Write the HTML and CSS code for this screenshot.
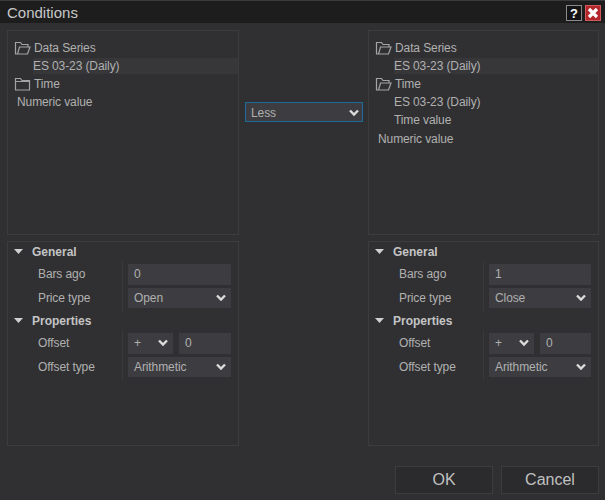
FILE: index.html
```html
<!DOCTYPE html>
<html lang="en">
<head>
<meta charset="utf-8">
<title>Conditions</title>
<link rel="stylesheet" href="styles.css">
</head>
<body>
<svg class="defs" width="0" height="0" aria-hidden="true">
  <symbol id="open" viewBox="0 0 17 14"><path d="M3.5 13H1.5V1.5H6.5L8 3.5H14V6M3.5 13L5.5 6H16L13.5 13H3.5Z" fill="none" stroke="#a3a3a3" stroke-width="1.2"/></symbol>
  <symbol id="closed" viewBox="0 0 17 14"><path d="M1.5 13V1.5H6.5L8 3.5H15.5V13H1.5ZM1.5 4.5H15.5" fill="none" stroke="#a3a3a3" stroke-width="1.2"/></symbol>
  <symbol id="chev" viewBox="0 0 10 8"><path d="M1 1.5L5 5.5L9 1.5" fill="none" stroke="#dcdcdc" stroke-width="2.4"/></symbol>
  <symbol id="tri" viewBox="0 0 9 5"><path d="M0 0H9L4.5 5Z" fill="#d0d0d0"/></symbol>
</svg>
<div class="window">
  <header class="titlebar">
    <h1 class="title">Conditions</h1>
    <div class="winbtns">
      <span class="winbtn help">?</span>
      <span class="winbtn close"><svg width="12" height="12" viewBox="0 0 12 12"><path d="M2 2L10 10M10 2L2 10" stroke="#fff" stroke-width="3.2"/></svg></span>
    </div>
  </header>
  <main class="content">
    <section class="side side-left">
      <div class="panel tree">
        <div class="row"><svg class="folder"><use href="#open"/></svg>Data Series</div>
        <div class="row sel">ES 03-23 (Daily)</div>
        <div class="row"><svg class="folder"><use href="#closed"/></svg>Time</div>
        <div class="row leaf">Numeric value</div>
      </div>
      <div class="panel props">
        <div class="group"><svg class="tri"><use href="#tri"/></svg>General</div>
        <div class="fields">
          <div class="field"><span class="label">Bars ago</span><span class="ctl input">0</span></div>
          <div class="field"><span class="label">Price type</span><span class="ctl select">Open<svg class="chev"><use href="#chev"/></svg></span></div>
        </div>
        <div class="group"><svg class="tri"><use href="#tri"/></svg>Properties</div>
        <div class="fields">
          <div class="field"><span class="label">Offset</span><span class="pair"><span class="ctl select sign">+<svg class="chev"><use href="#chev"/></svg></span><span class="ctl input num">0</span></span></div>
          <div class="field"><span class="label">Offset type</span><span class="ctl select">Arithmetic<svg class="chev"><use href="#chev"/></svg></span></div>
        </div>
      </div>
    </section>
    <div class="middle">
      <div class="ctl select compare">Less<svg class="chev"><use href="#chev"/></svg></div>
    </div>
    <section class="side side-right">
      <div class="panel tree">
        <div class="row"><svg class="folder"><use href="#open"/></svg>Data Series</div>
        <div class="row sel">ES 03-23 (Daily)</div>
        <div class="row"><svg class="folder"><use href="#open"/></svg>Time</div>
        <div class="row child">ES 03-23 (Daily)</div>
        <div class="row child">Time value</div>
        <div class="row leaf">Numeric value</div>
      </div>
      <div class="panel props">
        <div class="group"><svg class="tri"><use href="#tri"/></svg>General</div>
        <div class="fields">
          <div class="field"><span class="label">Bars ago</span><span class="ctl input">1</span></div>
          <div class="field"><span class="label">Price type</span><span class="ctl select">Close<svg class="chev"><use href="#chev"/></svg></span></div>
        </div>
        <div class="group"><svg class="tri"><use href="#tri"/></svg>Properties</div>
        <div class="fields">
          <div class="field"><span class="label">Offset</span><span class="pair"><span class="ctl select sign">+<svg class="chev"><use href="#chev"/></svg></span><span class="ctl input num">0</span></span></div>
          <div class="field"><span class="label">Offset type</span><span class="ctl select">Arithmetic<svg class="chev"><use href="#chev"/></svg></span></div>
        </div>
      </div>
    </section>
  </main>
  <footer class="actions">
    <button class="btn" type="button">OK</button>
    <button class="btn" type="button">Cancel</button>
  </footer>
</div>
</body>
</html>
```
FILE: styles.css
```css
* { box-sizing: border-box; }
html, body { margin: 0; height: 100%; }
body {
  background: #303033;
  font-family: "Liberation Sans", Arial, sans-serif;
  font-size: 12px;
  letter-spacing: -0.1px;
  color: #b0b0b0;
  overflow: hidden;
}
.defs { display: block; height: 0; }
.window {
  width: 605px;
  height: 500px;
  display: flex;
  flex-direction: column;
  border-top: 1px solid #3a3a3c;
}
.titlebar {
  height: 22px;
  background: #1d1d1e;
  display: flex;
  align-items: center;
  justify-content: space-between;
  padding: 0 4px 0 7px;
}
.title {
  margin: 0;
  font-size: 15px;
  font-weight: 400;
  letter-spacing: 0;
  color: #c8c8c8;
}
.winbtns { display: flex; gap: 3px; margin-top: 2px; }
.winbtn {
  width: 16px;
  height: 16px;
  display: flex;
  align-items: center;
  justify-content: center;
  font-weight: 700;
  font-size: 13px;
  color: #fff;
  border: 1px solid #8a8a8a;
}
.help { background: #141416; }
.close { background: #b3262b; border-color: #cf5a5c; }
.content {
  flex: none;
  display: flex;
  padding: 7px 6px 0 7px;
}
.side {
  display: flex;
  flex-direction: column;
  gap: 6px;
}
.side-left { width: 232px; }
.side-right { width: 231px; }
.panel {
  height: 205px;
  border: 1px solid #3c3c3f;
}
.tree { padding-top: 7.6px; }
.row {
  height: 18.2px;
  display: flex;
  align-items: center;
  padding-left: 9px;
  white-space: nowrap;
}
.folder { width: 17px; height: 14px; margin-right: 3px; margin-left: -3px; flex: none; }
.row.child { padding-left: 25px; }
.row.sel {
  margin-left: 22px;
  padding: 1px 0 1px 3px;
  background: #37373a;
  background-clip: content-box;
}
.props { padding-top: 2px; }
.group {
  height: 17px;
  display: flex;
  align-items: center;
  padding: 0 0 1px 6px;
  font-weight: 700;
  letter-spacing: 0;
  color: #c4c4c4;
}
.tri { width: 9px; height: 5px; margin-right: 9px; margin-top: -2px; flex: none; }
.fields {
  display: flex;
  flex-direction: column;
  gap: 3px;
  margin-bottom: 2px;
  padding: 3px 7px 3px 0;
  background: linear-gradient(#39393c, #39393c) 114px 0 / 1px 100% no-repeat;
}
.field {
  height: 20.5px;
  display: flex;
  align-items: center;
}
.label {
  width: 120px;
  padding-left: 30px;
  flex: none;
}
.ctl {
  background: #3d3d41;
  display: flex;
  align-items: center;
  justify-content: space-between;
  color: #b0b0b0;
}
.field > .ctl { flex: 1; height: 100%; }
.input { padding-left: 6px; }
.select { padding: 0 5px 0 6px; }
.chev { width: 10px; height: 8px; flex: none; }
.pair { display: flex; gap: 6px; flex: 1; height: 100%; }
.sign { width: 45px; }
.num { flex: 1; }
.middle {
  width: 129px;
  padding-top: 72px;
  flex: none;
}
.compare {
  width: 118px;
  height: 20px;
  margin-left: 6px;
  border: 1px solid #1d6a9c;
  padding: 1px 3px 0 5px;
}
.actions {
  display: flex;
  justify-content: flex-end;
  gap: 8px;
  padding: 20px 6px 0 0;
}
.btn {
  width: 98px;
  height: 28px;
  background: #2b2b2d;
  border: 1px solid #3c3c3f;
  color: #c0c0c0;
  font: 400 16px "Liberation Sans", Arial, sans-serif;
  padding: 0;
}
```
